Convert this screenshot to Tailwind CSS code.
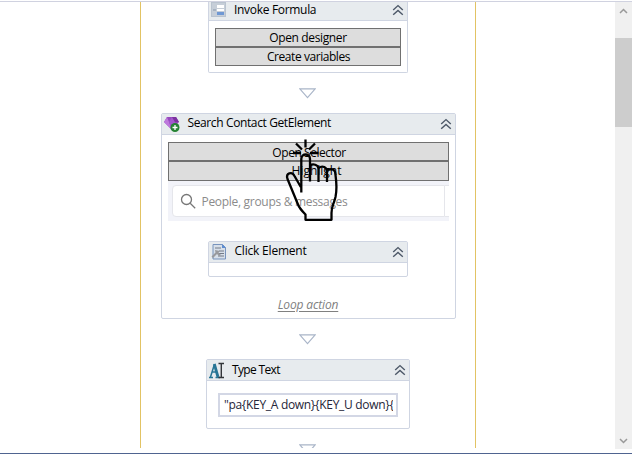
<!DOCTYPE html>
<html lang="en">
<head>
<meta charset="utf-8">
<title>Workflow designer</title>
<script src="https://cdn.jsdelivr.net/npm/@tailwindcss/browser@4"></script>
</head>
<body class="w-[632px] h-[454px] overflow-hidden bg-white text-black text-[12px] leading-[16px] font-['Open_Sans','Noto_Sans',sans-serif]">
<svg class="hidden">
  <symbol id="chev" viewBox="0 0 12 12"><path d="M1.200 6 6 1.600 10.800 6M1.200 10.800 6 6.400l4.800 4.400" fill="none" stroke="#4d5868" stroke-width="1.400"/></symbol>
  <symbol id="tri" viewBox="0 0 17 11"><path d="M.8.8h15.400L8.500 9.700z" fill="#fff" stroke="#a9b5c8" stroke-width="1.200"/></symbol>
</svg>
<div class="relative flex flex-col h-[454px] border-b border-[#4f6490]">
  <div class="h-[2px] shrink-0 bg-white border-b border-[#d0d2e0]"></div>
  <div class="flex h-[447px] pl-[140px] justify-between shrink-0">
    <main class="w-[336px] h-[446px] border-x border-[#e2c364] overflow-hidden flex flex-col items-center">
      <section class="w-[200px] h-[71px] shrink-0 border border-t-0 border-[#cfd5e2] rounded-b-[2px]">
        <div class="h-[19px] bg-[#e7ebee] border-b border-[#cfd5e2] flex items-start pl-[2px] pr-[3px]">
          <svg class="w-[15px] h-[15px]" viewBox="0 0 15 15"><path d="M0 0h15v15H0z" fill="#b9c3cf"/><path d="M1 1h13v13H1z" fill="#c6ced8"/><path d="M6 3h7v3H6zM6 7h7v2H6z" fill="#fff"/><path d="M6 10h7v3H6z" fill="#6f98d4"/><path d="M2 8h3" stroke="#8797aa"/></svg>
          <span class="ml-[8px] grow whitespace-nowrap tracking-[-0.31px]">Invoke Formula</span>
          <svg class="w-[12px] h-[12px] mt-[2px]"><use href="#chev"/></svg>
        </div>
        <div class="mt-[7px] mx-[6px] text-center">
          <div class="h-[19px] bg-[#ddd] border border-[#707070] leading-[18px] tracking-[-0.36px]">Open designer</div>
          <div class="h-[19px] bg-[#ddd] border border-[#707070] leading-[17px] tracking-[-0.44px] pl-px">Create variables</div>
        </div>
      </section>
      <svg class="w-[17px] h-[11px] mt-[15px] mr-[2px] shrink-0"><use href="#tri"/></svg>
      <section class="w-[295px] h-[206px] mt-[14px] shrink-0 border border-[#cfd5e2] rounded-[2px] flex flex-col items-center">
        <div class="w-full h-[21px] shrink-0 bg-[#e7ebee] border-b border-[#cfd5e2] flex items-center pl-[2px] pr-[4px]">
          <svg class="w-[16px] h-[16px]" viewBox="0 0 16 16"><path d="M3 1h9l3 5-7 8-8-8z" fill="#9648bd"/><path d="M3 1l2 5 3 8L0 6z" fill="#bd78dc"/><path d="M5 6l3-5 3 5-3 8z" fill="#a358cf"/><path d="M8 1h4l3 5h-4z" fill="#7c329f"/><circle cx="11" cy="11.500" r="4.500" fill="#258333"/><path d="M8.500 11.500h5M11 9v5" stroke="#fff" stroke-width="1.300"/></svg>
          <span class="ml-[8px] -mt-[2px] grow whitespace-nowrap tracking-[-0.38px]">Search Contact GetElement</span>
          <svg class="w-[12px] h-[12px] -mr-px"><use href="#chev"/></svg>
        </div>
        <div class="w-[281px] mt-[7px] shrink-0 text-center">
          <div class="h-[19px] bg-[#ddd] border border-[#707070] leading-[19px] tracking-[-0.45px] pl-[2px]">Open Selector</div>
          <div class="h-[20px] bg-[#ddd] border border-[#707070] leading-[18px] pl-[17px]">Highlight</div>
        </div>
        <div class="w-[281px] h-[40px] shrink-0 bg-[#f2f3f9] flex items-center pl-[4px]">
          <div class="w-[273px] h-[32px] bg-white border border-[#e5e6eb] rounded-l-[4px] flex items-center pl-[7px] text-[#8b8b8b]">
            <svg class="w-[16px] h-[16px]" viewBox="0 0 16 16"><circle cx="6.500" cy="6.500" r="5" fill="none" stroke="#777" stroke-width="1.300"/><path d="m10.200 10.200 5 5" stroke="#777" stroke-width="1.300"/></svg>
            <span class="ml-[6px] mt-[2px] whitespace-nowrap tracking-[-0.3px]">People, groups &amp; messages</span>
          </div>
          <div class="grow h-[32px] bg-white border-y border-[#e5e6eb]"></div>
        </div>
        <section class="w-[200px] h-[36px] mt-[20px] shrink-0 border border-[#cfd5e2] rounded-[2px] mr-px">
          <div class="h-[21px] bg-[#e7ebee] border-b border-[#cfd5e2] flex items-center pl-[2px] pr-[3px]">
            <svg class="w-[16px] h-[16px]" viewBox="0 0 16 16"><path d="M2 .5h9.500l3 3V15H2z" fill="#d7dfe9" stroke="#7793bd"/><path d="M11 0l4 4h-4z" fill="#5e8dd0"/><path d="M4 4h6M8 7h5M8 9.500h5M7 12h6" stroke="#737b88"/><path d="m4 6 5 1-1.500 1.500L10 11l-2 1-2-2-4 4-1.500-1.500 4-4z" fill="#98999d"/></svg>
            <span class="ml-[8px] -mt-[2px] grow whitespace-nowrap tracking-[-0.2px]">Click Element</span>
            <svg class="w-[12px] h-[12px]"><use href="#chev"/></svg>
          </div>
        </section>
        <div class="mt-[20px] shrink-0 italic underline underline-offset-2 text-[#808080] leading-[16px] tracking-[-0.15px]">Loop action</div>
      </section>
      <svg class="w-[17px] h-[11px] mt-[15px] mr-[2px] shrink-0"><use href="#tri"/></svg>
      <section class="w-[204px] h-[70px] mt-[14px] shrink-0 border border-[#cfd5e2] rounded-[2px]">
        <div class="h-[21px] bg-[#e7ebee] border-b border-[#cfd5e2] flex items-center pl-[2px] pr-[3px]">
          <svg class="w-[16px] h-[17px]" viewBox="0 0 16 17"><path d="M1.500 15 5.500 2M3 10h5" fill="none" stroke="#277595" stroke-width="1.500"/><path d="M5.300 2 9 15" stroke="#277595" stroke-width="2.800"/><path d="M0 15.500h4M6.500 15.500h4.500" stroke="#277595" stroke-width="1.500"/><path d="M9.500 1.500h5.500M12.300 1.500v14M9.500 15.500h5.500" stroke="#33363a" stroke-width="1.400"/></svg>
          <span class="ml-[7px] -mt-px grow whitespace-nowrap tracking-[-0.65px]">Type Text</span>
          <svg class="w-[12px] h-[12px]"><use href="#chev"/></svg>
        </div>
        <div class="w-[180px] h-[24px] mt-[12px] ml-[11px] border-2 border-[#d3d7e5] bg-white pl-[4px] pr-[3px] text-[#252538] leading-[20px]"><div class="overflow-hidden whitespace-nowrap tracking-[-0.31px]">"pa{KEY_A down}{KEY_U down}{</div></div>
      </section>
      <svg class="w-[17px] h-[11px] mt-[15px] mr-[2px] shrink-0"><use href="#tri"/></svg>
    </main>
    <aside class="w-[17px] h-[447px] bg-[#f0f0f0] flex flex-col items-center">
      <svg class="w-[9px] h-[6px] mt-[6px]" viewBox="0 0 9 6"><path d="m1 5 3.500-3.500L8 5" fill="none" stroke="#999" stroke-width="1.500"/></svg>
      <div class="w-full h-[89px] mt-[24px] bg-[#cdcdcd]"></div>
      <svg class="w-[9px] h-[6px] mt-auto mb-[5px]" viewBox="0 0 9 6"><path d="m1 1 3.500 3.500L8 1" fill="none" stroke="#999" stroke-width="1.500"/></svg>
    </aside>
  </div>
  <svg class="absolute left-[280px] top-[135px] w-[62px] h-[90px]" viewBox="280 135 62 90" fill="none" stroke="#000" stroke-width="2.300" stroke-linejoin="round">
    <path d="M301.300 192.500V159c0-6 8.700-6 8.700 0v22.500M310 165.500c3-2 8-1 8.500 3v13.500M318.500 168c4-3 8.500-1 8.500 4v10M327 170c6-2 8.500 0 8.500 5 1 7 1.500 15 0 22-2 8-4 9-4 16v6.800h-26v-5.300c-3-3-6-6-7.500-10l-10.500-25.500c-2-6 4.500-8 7-3l6.300 11"/>
    <path d="M305.500 139.500v8M296 143.500l6 6M315 143.500l-6 6M293 153h8M310 153h8.500"/>
  </svg>
</div>
</body>
</html>
